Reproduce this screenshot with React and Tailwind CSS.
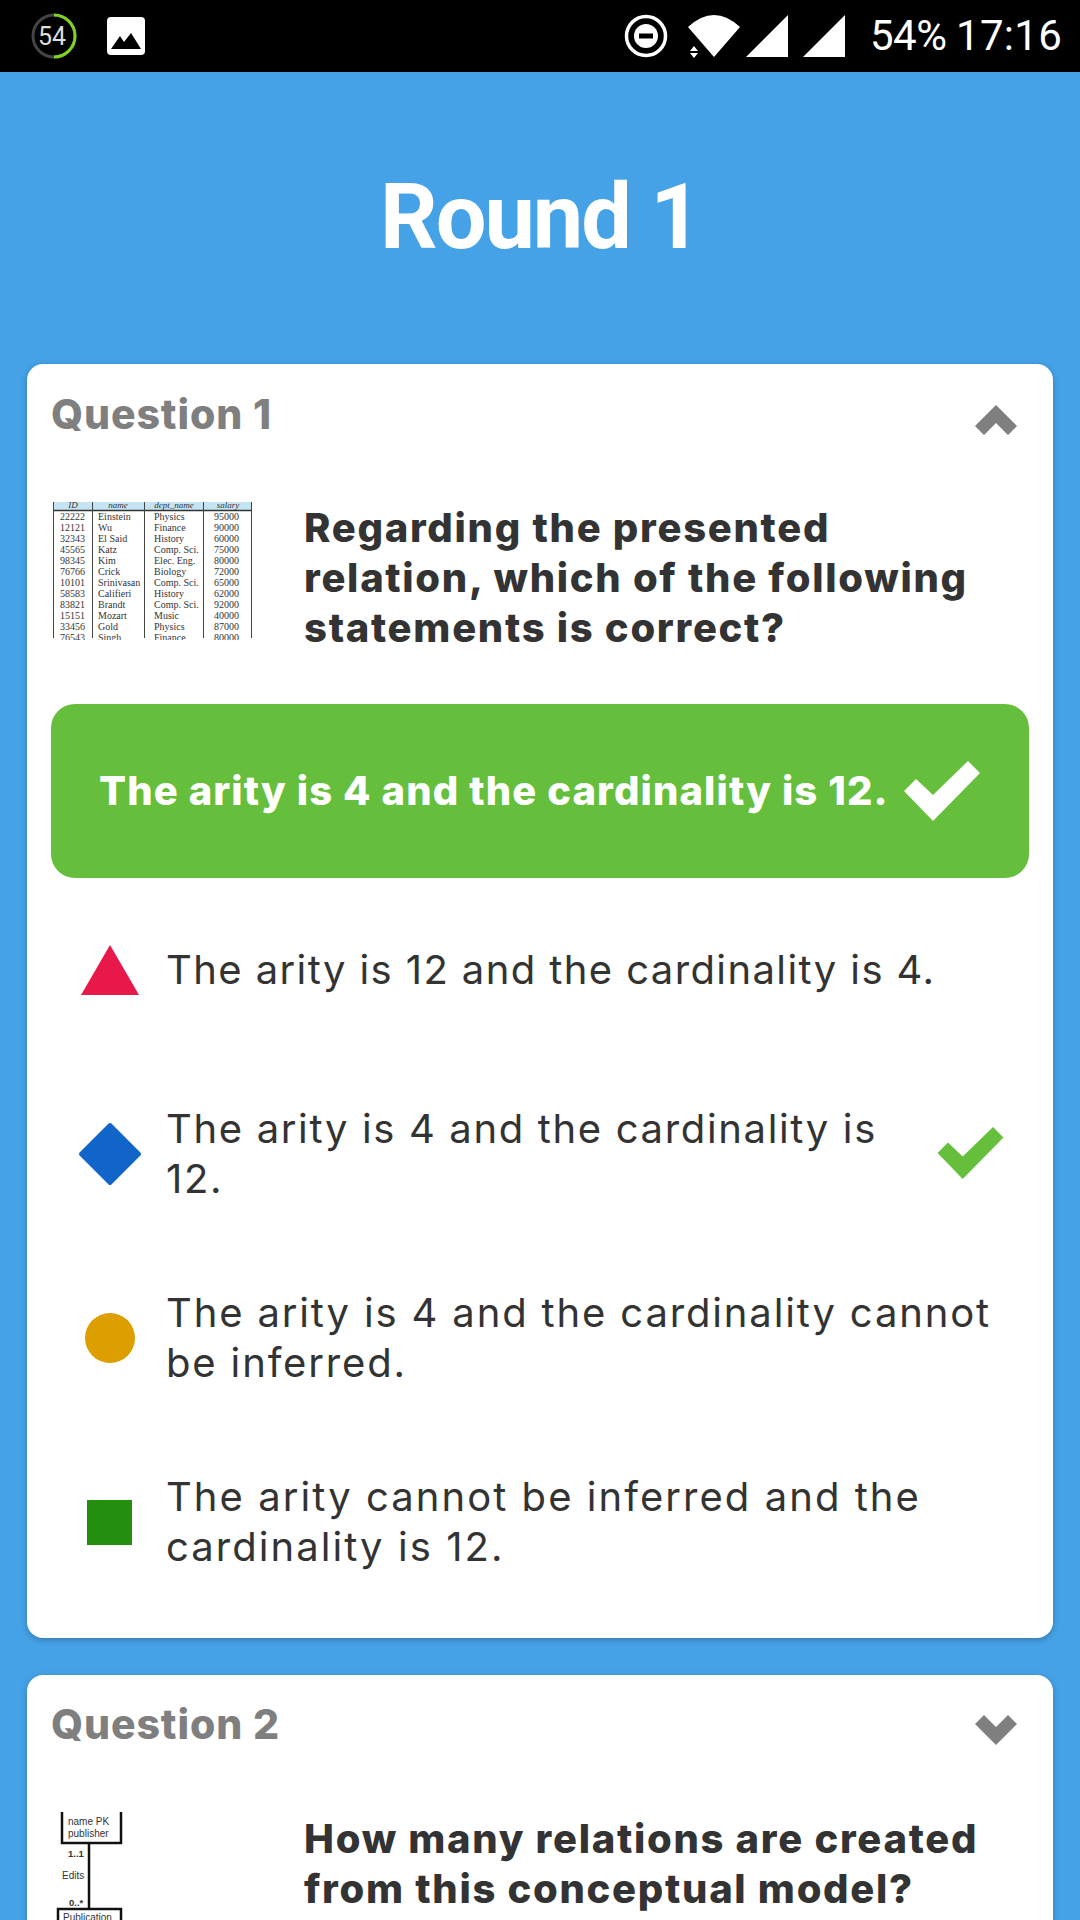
const font = { fontFamily: "Inter, 'Noto Sans', sans-serif" };

function StatusBar() {
  return (
    <div className="h-[72px] bg-black relative shrink-0">
      <svg width="1080" height="72" viewBox="0 0 1080 72" className="absolute left-0 top-0">
        <circle cx="54" cy="36" r="21" fill="none" stroke="#444" strokeWidth="3" />
        <path d="M54 15 A21 21 0 0 1 54 57" fill="none" stroke="#7ed321" strokeWidth="3" />
        <text x="52" y="45" textAnchor="middle" fill="#ddd" fontSize="25" fontFamily="Roboto">54</text>
        <rect x="107" y="17" width="38" height="38" rx="4" fill="#fff" />
        <path d="M111 49 L120 36 L124 42 L131 33 L141 49 Z" fill="#000" />
        <circle cx="646" cy="36" r="19.5" fill="none" stroke="#fff" strokeWidth="3.5" />
        <circle cx="646" cy="36" r="12" fill="#fff" />
        <rect x="639" y="33.5" width="14" height="5" fill="#000" />
        <path d="M688 27 Q714 3 740 27 L714 57 Z" fill="#fff" />
        <path d="M694 46 L690 51 L698 51 Z M690 53 L698 53 L694 58 Z" fill="#fff" />
        <path d="M788 15 L788 57 L746 57 Z" fill="#fff" />
        <path d="M845 15 L845 57 L803 57 Z" fill="#fff" />
      </svg>
      <span className="absolute left-[870px] top-[14px] text-[42px] leading-[44px] text-white tracking-[-0.5px]" style={{ fontFamily: "Roboto" }}>54%</span>
      <span className="absolute left-[956px] top-[14px] text-[42px] leading-[44px] text-white tracking-[0.3px]" style={{ fontFamily: "Roboto" }}>17:16</span>
    </div>
  );
}

function TableThumb() {
  const rows = [
    ["22222", "Einstein", "Physics", "95000"],
    ["12121", "Wu", "Finance", "90000"],
    ["32343", "El Said", "History", "60000"],
    ["45565", "Katz", "Comp. Sci.", "75000"],
    ["98345", "Kim", "Elec. Eng.", "80000"],
    ["76766", "Crick", "Biology", "72000"],
    ["10101", "Srinivasan", "Comp. Sci.", "65000"],
    ["58583", "Califieri", "History", "62000"],
    ["83821", "Brandt", "Comp. Sci.", "92000"],
    ["15151", "Mozart", "Music", "40000"],
    ["33456", "Gold", "Physics", "87000"],
    ["76543", "Singh", "Finance", "80000"],
  ];
  return (
    <svg width="200" height="140" viewBox="0 0 200 140" fontFamily="'Liberation Serif', serif" fontSize="10" fill="#333">
      <rect x="0" y="2" width="199" height="8" fill="#c5e4f3" />
      <path d="M0 10.5 H199" stroke="#333" strokeWidth="1.5" />
      <path d="M0.5 2 V138 M39.5 2 V138 M91.5 2 V138 M150.5 2 V138 M198.5 2 V138" stroke="#444" strokeWidth="1" />
      <g fontStyle="italic" fontSize="9">
        <text x="20" y="8" textAnchor="middle">ID</text>
        <text x="65" y="8" textAnchor="middle">name</text>
        <text x="121" y="8" textAnchor="middle">dept_name</text>
        <text x="175" y="8" textAnchor="middle">salary</text>
      </g>
      {rows.map((r, i) => (
        <g key={r[0]}>
          <text x="7" y={20 + i * 11}>{r[0]}</text>
          <text x="45" y={20 + i * 11}>{r[1]}</text>
          <text x="101" y={20 + i * 11}>{r[2]}</text>
          <text x="161" y={20 + i * 11}>{r[3]}</text>
        </g>
      ))}
    </svg>
  );
}

function Diagram() {
  return (
    <svg width="200" height="108" viewBox="0 0 200 108" fontFamily="'Liberation Sans', sans-serif" fontSize="10" fill="#333">
      <path d="M9 0 V31 H68 V0" fill="none" stroke="#111" strokeWidth="2.5" />
      <text x="15" y="13">name  PK</text>
      <text x="15" y="25">publisher</text>
      <path d="M36 31 V97" stroke="#111" strokeWidth="2.5" />
      <text x="15" y="45" fontWeight="700" fontSize="9.5">1..1</text>
      <text x="9" y="67">Edits</text>
      <text x="16" y="94" fontWeight="700" fontSize="9.5">0..*</text>
      <path d="M5 108 V97 H68 V108" fill="none" stroke="#111" strokeWidth="2.5" />
      <text x="10" y="109">Publication</text>
    </svg>
  );
}

function Chevron({ up }) {
  return (
    <svg width="42" height="30" viewBox="0 0 42 30" className="block">
      <path
        d={up ? "M21 0 L42 21 L33 30 L21 18 L9 30 L0 21 Z" : "M21 30 L42 9 L33 0 L21 12 L9 0 L0 9 Z"}
        fill="#7f7f7f"
      />
    </svg>
  );
}

function Check({ color, w, h }) {
  return (
    <svg width={w} height={h} viewBox="0 0 76 60" className="block shrink-0">
      <path d="M29 60 L0 30 L12 18 L29 34 L64 0 L76 12 Z" fill={color} />
    </svg>
  );
}

function Shape({ kind }) {
  if (kind === "triangle")
    return <svg width="58" height="50" viewBox="0 0 58 50"><path d="M29 0 L58 50 H0 Z" fill="#e8194a" /></svg>;
  if (kind === "diamond")
    return <svg width="64" height="64" viewBox="0 0 64 64"><rect x="9.5" y="9.5" width="45" height="45" rx="2" transform="rotate(45 32 32)" fill="#1265c8" /></svg>;
  if (kind === "circle") return <div className="w-[50px] h-[50px] rounded-full bg-[#dd9e00]" />;
  return <div className="w-[45px] h-[45px] bg-[#248f0e] -ml-[2px]" />;
}

function Option({ kind, check, tracking, children }) {
  return (
    <div className="h-[184px] flex items-center">
      <div className="w-[115px] shrink-0 flex justify-center pl-[3px]">
        <Shape kind={kind} />
      </div>
      <div className={"flex-1 text-[40px] leading-[50px] font-normal text-[#333] " + tracking}>{children}</div>
      {check && (
        <div className="mr-[25px] mb-[2px]">
          <Check color="#66bf3c" w={67} h={52} />
        </div>
      )}
    </div>
  );
}

export default function App() {
  return (
    <div className="w-[1080px] h-[1920px] overflow-hidden bg-[#45a2e7] flex flex-col" style={font}>
      <StatusBar />
      <div className="h-[292px] shrink-0 flex items-center justify-center">
        <h1 className="text-[90px] leading-none font-bold text-white tracking-[-2px]" style={{ fontFamily: "Roboto, sans-serif" }}>Round 1</h1>
      </div>

      <div className="mx-[27px] bg-white rounded-[16px] shadow-[0_2px_6px_rgba(0,0,0,0.25)] px-[24px] pb-[24px] shrink-0">
        <div className="h-[102px] flex items-start justify-between pt-[25px]">
          <span className="text-[41px] leading-[50px] font-extrabold text-[#7f7f7f] tracking-[0.9px]">Question 1</span>
          <div className="mt-[16px] mr-[12px]"><Chevron up /></div>
        </div>
        <div className="flex h-[238px] pt-[37px] items-start">
          <div className="ml-[2px] w-[251px] shrink-0 -mt-[3px]"><TableThumb /></div>
          <div className="text-[40px] leading-[50px] font-extrabold text-[#333] tracking-[1.7px]">
            Regarding the presented<br />relation, which of the following<br />statements is correct?
          </div>
        </div>
        <div className="h-[174px] rounded-[24px] bg-[#66bf3c] flex items-center justify-between pl-[48px] pr-[49px]">
          <span className="text-[40px] leading-[50px] font-extrabold text-white tracking-[1.1px]">The arity is 4 and the cardinality is 12.</span>
          <Check color="#fff" w={76} h={60} />
        </div>
        <Option kind="triangle" tracking="tracking-[1.4px]">The arity is 12 and the cardinality is 4.</Option>
        <Option kind="diamond" check tracking="tracking-[1.65px]">The arity is 4 and the cardinality is<br />12.</Option>
        <Option kind="circle" tracking="tracking-[1.85px]">The arity is 4 and the cardinality cannot<br />be inferred.</Option>
        <Option kind="square" tracking="tracking-[2.05px]">The arity cannot be inferred and the<br />cardinality is 12.</Option>
      </div>

      <div className="mx-[27px] mt-[37px] bg-white rounded-[16px] shadow-[0_2px_6px_rgba(0,0,0,0.25)] px-[24px] shrink-0 h-[400px]">
        <div className="h-[102px] flex items-start justify-between pt-[24px]">
          <span className="text-[41px] leading-[50px] font-extrabold text-[#7f7f7f] tracking-[0.9px]">Question 2</span>
          <div className="mt-[16px] mr-[12px]"><Chevron /></div>
        </div>
        <div className="flex pt-[37px] items-start">
          <div className="ml-[2px] w-[251px] shrink-0 -mt-[2px]"><Diagram /></div>
          <div className="text-[40px] leading-[50px] font-extrabold text-[#333] tracking-[1.7px]">
            How many relations are created<br />from this conceptual model?
          </div>
        </div>
      </div>
    </div>
  );
}
